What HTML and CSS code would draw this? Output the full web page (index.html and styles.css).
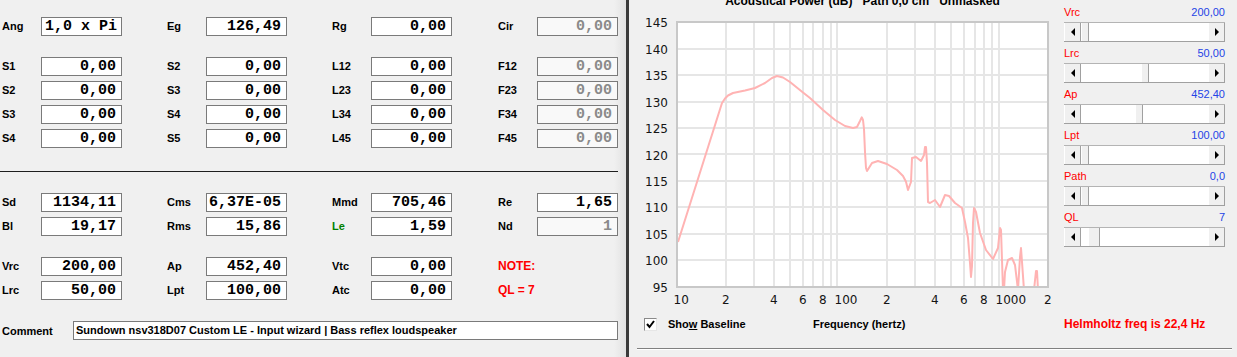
FILE: index.html
```html
<!DOCTYPE html>
<html>
<head>
<meta charset="utf-8">
<link rel="stylesheet" href="styles.css">
</head>
<body>
<div class="app">
  <section class="params">
    <div class="row">
      <div class="field"><span class="lbl">Ang</span><span class="box left">1,0 x Pi</span></div>
      <div class="field"><span class="lbl">Eg</span><span class="box">126,49</span></div>
      <div class="field"><span class="lbl">Rg</span><span class="box">0,00</span></div>
      <div class="field"><span class="lbl">Cir</span><span class="box off">0,00</span></div>
    </div>
    <div class="block">
      <div class="row">
        <div class="field"><span class="lbl">S1</span><span class="box">0,00</span></div>
        <div class="field"><span class="lbl">S2</span><span class="box">0,00</span></div>
        <div class="field"><span class="lbl">L12</span><span class="box">0,00</span></div>
        <div class="field"><span class="lbl">F12</span><span class="box off">0,00</span></div>
      </div>
      <div class="row">
        <div class="field"><span class="lbl">S2</span><span class="box">0,00</span></div>
        <div class="field"><span class="lbl">S3</span><span class="box">0,00</span></div>
        <div class="field"><span class="lbl">L23</span><span class="box">0,00</span></div>
        <div class="field"><span class="lbl">F23</span><span class="box off">0,00</span></div>
      </div>
      <div class="row">
        <div class="field"><span class="lbl">S3</span><span class="box">0,00</span></div>
        <div class="field"><span class="lbl">S4</span><span class="box">0,00</span></div>
        <div class="field"><span class="lbl">L34</span><span class="box">0,00</span></div>
        <div class="field"><span class="lbl">F34</span><span class="box off">0,00</span></div>
      </div>
      <div class="row">
        <div class="field"><span class="lbl">S4</span><span class="box">0,00</span></div>
        <div class="field"><span class="lbl">S5</span><span class="box">0,00</span></div>
        <div class="field"><span class="lbl">L45</span><span class="box">0,00</span></div>
        <div class="field"><span class="lbl">F45</span><span class="box off">0,00</span></div>
      </div>
    </div>
    <div class="sep"></div>
    <div class="block first">
      <div class="row">
        <div class="field"><span class="lbl">Sd</span><span class="box">1134,11</span></div>
        <div class="field"><span class="lbl">Cms</span><span class="box">6,37E-05</span></div>
        <div class="field"><span class="lbl">Mmd</span><span class="box">705,46</span></div>
        <div class="field"><span class="lbl">Re</span><span class="box">1,65</span></div>
      </div>
      <div class="row">
        <div class="field"><span class="lbl">Bl</span><span class="box">19,17</span></div>
        <div class="field"><span class="lbl">Rms</span><span class="box">15,86</span></div>
        <div class="field"><span class="lbl green">Le</span><span class="box">1,59</span></div>
        <div class="field"><span class="lbl">Nd</span><span class="box off">1</span></div>
      </div>
    </div>
    <div class="block">
      <div class="row">
        <div class="field"><span class="lbl">Vrc</span><span class="box">200,00</span></div>
        <div class="field"><span class="lbl">Ap</span><span class="box">452,40</span></div>
        <div class="field"><span class="lbl">Vtc</span><span class="box">0,00</span></div>
        <div class="field"><span class="note">NOTE:</span></div>
      </div>
      <div class="row">
        <div class="field"><span class="lbl">Lrc</span><span class="box">50,00</span></div>
        <div class="field"><span class="lbl">Lpt</span><span class="box">100,00</span></div>
        <div class="field"><span class="lbl">Atc</span><span class="box">0,00</span></div>
        <div class="field"><span class="note">QL = 7</span></div>
      </div>
    </div>
    <div class="comment">
      <span class="clbl">Comment</span>
      <span class="cbox">Sundown nsv318D07 Custom LE - Input wizard | Bass reflex loudspeaker</span>
    </div>
  </section>
  <div class="divider"></div>
  <section class="graph">
    <div class="top">
      <div class="chart">
        <div class="title">Acoustical Power (dB)   Path 0,0 cm   Unmasked</div>
        <svg class="plot" viewBox="629 10 435 298" width="435" height="298" xmlns="http://www.w3.org/2000/svg">
          <defs>
            <clipPath id="pclip"><rect x="678" y="23" width="369" height="263"/></clipPath>
          </defs>
          <rect x="677" y="22" width="371" height="265" fill="#ffffff"/>
          <g stroke="#e6e6e6" stroke-width="2" shape-rendering="crispEdges">
            <line x1="726" y1="22" x2="726" y2="287"/>
            <line x1="754" y1="22" x2="754" y2="287"/>
            <line x1="774" y1="22" x2="774" y2="287"/>
            <line x1="790" y1="22" x2="790" y2="287"/>
            <line x1="803" y1="22" x2="803" y2="287"/>
            <line x1="813" y1="22" x2="813" y2="287"/>
            <line x1="823" y1="22" x2="823" y2="287"/>
            <line x1="831" y1="22" x2="831" y2="287"/>
            <line x1="837" y1="22" x2="837" y2="287"/>
            <line x1="887" y1="22" x2="887" y2="287"/>
            <line x1="915" y1="22" x2="915" y2="287"/>
            <line x1="935" y1="22" x2="935" y2="287"/>
            <line x1="951" y1="22" x2="951" y2="287"/>
            <line x1="964" y1="22" x2="964" y2="287"/>
            <line x1="975" y1="22" x2="975" y2="287"/>
            <line x1="984" y1="22" x2="984" y2="287"/>
            <line x1="992" y1="22" x2="992" y2="287"/>
            <line x1="999" y1="22" x2="999" y2="287"/>
            <line x1="677" y1="49" x2="1048" y2="49"/>
            <line x1="677" y1="75" x2="1048" y2="75"/>
            <line x1="677" y1="102" x2="1048" y2="102"/>
            <line x1="677" y1="128" x2="1048" y2="128"/>
            <line x1="677" y1="154" x2="1048" y2="154"/>
            <line x1="677" y1="181" x2="1048" y2="181"/>
            <line x1="677" y1="207" x2="1048" y2="207"/>
            <line x1="677" y1="234" x2="1048" y2="234"/>
            <line x1="677" y1="260" x2="1048" y2="260"/>
          </g>
          <polyline clip-path="url(#pclip)" fill="none" stroke="#ffb3b3" stroke-width="2" stroke-linejoin="round"
            points="678,242 722,103 725,98.5 728,95.5 733,93 745,90.5 755,88 765,83 772,78 777,76 783,77.5 790,82 803,92.5 810,98 823,110 835,120 845,126 853,128 857,127 860,121 861.7,117.3 863,120 864,129 865,152 866,168 867,171 872,163 878,161 887,164 897,170 903,176 906,181.7 908,190 911,182 912,158 916,157 921,161 924,155 925,147 926,147 927,163 928,202 930,203 935,200 940,207 945,195 949,196 955,203 962,208 965,222 968,238 970,263 971,277 972,266 973,223 974,208 976,212 980,233 986,250 993,259 998,248 1000,228 1001,230 1002,260 1003,290 1004,290 1005,272 1008,260 1012,258 1015,265 1018,290 1020,257 1021,248 1022,262 1024,290 1034,290 1036,271 1037,271 1038,290"/>
          <rect x="677" y="22" width="371" height="265" fill="none" stroke="#c8c8c8" stroke-width="2" shape-rendering="crispEdges"/>
          <g class="ax" text-anchor="end">
            <text x="668" y="27">145</text>
            <text x="668" y="53.5">140</text>
            <text x="668" y="80">135</text>
            <text x="668" y="106.5">130</text>
            <text x="668" y="133">125</text>
            <text x="668" y="159.5">120</text>
            <text x="668" y="186">115</text>
            <text x="668" y="212">110</text>
            <text x="668" y="238.5">105</text>
            <text x="668" y="265">100</text>
            <text x="668" y="291.5">95</text>
          </g>
          <g class="ax">
            <text x="673.5" y="304">10</text>
            <text x="722" y="304">2</text>
            <text x="770" y="304">4</text>
            <text x="799" y="304">6</text>
            <text x="819" y="304">8</text>
            <text x="834.5" y="304">100</text>
            <text x="883" y="304">2</text>
            <text x="931" y="304">4</text>
            <text x="960" y="304">6</text>
            <text x="980" y="304">8</text>
            <text x="995.5" y="304">1000</text>
            <text x="1044" y="304">2</text>
          </g>
        </svg>
      </div>
      <div class="sliders">
        <div class="slider">
          <div class="shead"><span class="sname">Vrc</span><span class="sval">200,00</span></div>
          <div class="sb"><span class="arrow l"><svg width="4" height="8" viewBox="0 0 4 8"><polygon points="4,0 0,4 4,8"/></svg></span><span class="track"><span class="thumb" style="margin-left:0px"></span></span><span class="arrow r"><svg width="4" height="8" viewBox="0 0 4 8"><polygon points="0,0 4,4 0,8"/></svg></span></div>
        </div>
        <div class="slider">
          <div class="shead"><span class="sname">Lrc</span><span class="sval">50,00</span></div>
          <div class="sb"><span class="arrow l"><svg width="4" height="8" viewBox="0 0 4 8"><polygon points="4,0 0,4 4,8"/></svg></span><span class="track"><span class="thumb" style="margin-left:60px"></span></span><span class="arrow r"><svg width="4" height="8" viewBox="0 0 4 8"><polygon points="0,0 4,4 0,8"/></svg></span></div>
        </div>
        <div class="slider">
          <div class="shead"><span class="sname">Ap</span><span class="sval">452,40</span></div>
          <div class="sb"><span class="arrow l"><svg width="4" height="8" viewBox="0 0 4 8"><polygon points="4,0 0,4 4,8"/></svg></span><span class="track"><span class="thumb" style="margin-left:54px"></span></span><span class="arrow r"><svg width="4" height="8" viewBox="0 0 4 8"><polygon points="0,0 4,4 0,8"/></svg></span></div>
        </div>
        <div class="slider">
          <div class="shead"><span class="sname">Lpt</span><span class="sval">100,00</span></div>
          <div class="sb"><span class="arrow l"><svg width="4" height="8" viewBox="0 0 4 8"><polygon points="4,0 0,4 4,8"/></svg></span><span class="track"><span class="thumb" style="margin-left:0px"></span></span><span class="arrow r"><svg width="4" height="8" viewBox="0 0 4 8"><polygon points="0,0 4,4 0,8"/></svg></span></div>
        </div>
        <div class="slider">
          <div class="shead"><span class="sname">Path</span><span class="sval">0,0</span></div>
          <div class="sb"><span class="arrow l"><svg width="4" height="8" viewBox="0 0 4 8"><polygon points="4,0 0,4 4,8"/></svg></span><span class="track"><span class="thumb" style="margin-left:0px"></span></span><span class="arrow r"><svg width="4" height="8" viewBox="0 0 4 8"><polygon points="0,0 4,4 0,8"/></svg></span></div>
        </div>
        <div class="slider">
          <div class="shead"><span class="sname">QL</span><span class="sval">7</span></div>
          <div class="sb"><span class="arrow l"><svg width="4" height="8" viewBox="0 0 4 8"><polygon points="4,0 0,4 4,8"/></svg></span><span class="track"><span class="thumb wide" style="margin-left:7px"></span></span><span class="arrow r"><svg width="4" height="8" viewBox="0 0 4 8"><polygon points="0,0 4,4 0,8"/></svg></span></div>
        </div>
      </div>
    </div>
    <div class="foot">
      <span class="check"><svg width="11" height="11" viewBox="0 0 11 11"><polyline points="2,5 4.5,8 9,2" fill="none" stroke="#000" stroke-width="2"/></svg></span>
      <span class="show">Sho<u>w</u> Baseline</span>
      <span class="freq">Frequency (hertz)</span>
      <span class="helm">Helmholtz freq is 22,4 Hz</span>
    </div>
    <div class="rule"></div>
  </section>
</div>
</body>
</html>
```

FILE: styles.css
```css
html, body {
  margin: 0;
  padding: 0;
}
body {
  width: 1237px;
  height: 357px;
  overflow: hidden;
  background: #f0f0f0;
  font-family: "Liberation Sans", Arial, sans-serif;
  color: #000;
}
.app {
  display: flex;
  height: 357px;
}
.params {
  width: 626px;
  flex: none;
  box-sizing: border-box;
  padding-top: 17px;
  background: linear-gradient(to right, #f0f0f0 614px, #e2e2e2 626px);
}
.divider {
  width: 3px;
  flex: none;
  background: #3a3a3a;
}
.row {
  display: grid;
  grid-template-columns: 165px 165px 166px 121px;
  padding-left: 1px;
  height: 19px;
}
.field {
  display: flex;
  align-items: center;
}
.lbl {
  width: 40px;
  flex: none;
  box-sizing: border-box;
  padding-left: 1px;
  font-size: 11px;
  font-weight: bold;
  line-height: 19px;
}
.lbl.green {
  color: #008000;
}
.note {
  padding-left: 1px;
  font-size: 12px;
  font-weight: bold;
  color: #ff0000;
  line-height: 19px;
}
.box {
  width: 81px;
  height: 19px;
  flex: none;
  box-sizing: border-box;
  border: 1px solid #7a7a7a;
  background: #ffffff;
  font-family: "Liberation Mono", "Courier New", monospace;
  font-weight: bold;
  font-size: 15px;
  line-height: 17px;
  text-align: right;
  padding-right: 5px;
  white-space: pre;
  overflow: hidden;
}
.box.left {
  text-align: left;
  padding-left: 3px;
  padding-right: 0;
}
.box.off {
  background: #f9f9f9;
  color: #8a8a8a;
}
.block {
  display: flex;
  flex-direction: column;
  gap: 5px;
  margin-top: 21px;
}
.sep {
  width: 618px;
  height: 1px;
  background: #1e1e1e;
  margin-top: 23px;
}
.comment {
  display: flex;
  align-items: center;
  margin-top: 21px;
  padding-left: 2px;
}
.clbl {
  width: 71px;
  flex: none;
  font-size: 11px;
  font-weight: bold;
}
.cbox {
  width: 545px;
  height: 19px;
  box-sizing: border-box;
  border: 1px solid #7a7a7a;
  background: #ffffff;
  font-size: 11px;
  font-weight: bold;
  line-height: 17px;
  padding-left: 2px;
  white-space: nowrap;
  overflow: hidden;
}

/* right panel */
.graph {
  flex: 1;
  display: flex;
  flex-direction: column;
  min-width: 0;
}
.top {
  display: flex;
  height: 308px;
}
.chart {
  width: 435px;
  flex: none;
  display: flex;
  flex-direction: column;
}
.title {
  margin-top: -7px;
  margin-left: 48px;
  width: 371px;
  height: 17px;
  line-height: 17px;
  text-align: center;
  font-size: 12px;
  font-weight: bold;
  white-space: pre;
}
.plot {
  display: block;
}
.ax text {
  font-family: "DejaVu Sans", Verdana, sans-serif;
  font-size: 12px;
  fill: #141414;
}
.sliders {
  width: 161px;
  flex: none;
  padding-top: 2px;
  display: flex;
  flex-direction: column;
  gap: 1px;
}
.shead {
  display: flex;
  justify-content: space-between;
  height: 20px;
  line-height: 20px;
  font-size: 11px;
}
.sname {
  color: #ff0000;
}
.sval {
  color: #2444e6;
}
.sb {
  display: flex;
  height: 20px;
  box-sizing: border-box;
  background: #ffffff;
  border-top: 1px solid #b4b4b4;
  border-bottom: 1px solid #a0a0a0;
}
.arrow {
  width: 17px;
  flex: none;
  box-sizing: border-box;
  display: flex;
  align-items: center;
  justify-content: center;
  background: #f0f0f0;
  border-left: 1px solid #ffffff;
  border-right: 1px solid #a0a0a0;
}
.arrow svg {
  display: block;
}
.arrow polygon {
  fill: #000;
}
.track {
  flex: 1;
  display: flex;
}
.thumb {
  width: 8px;
  flex: none;
  box-sizing: border-box;
  background: #f0f0f0;
  border-left: 1px solid #ffffff;
  border-right: 1px solid #a0a0a0;
}
.thumb.wide {
  width: 12px;
}
.foot {
  display: flex;
  align-items: center;
  height: 16px;
  margin-top: 8px;
  padding-left: 15px;
  font-size: 11px;
  font-weight: bold;
}
.check {
  width: 13px;
  height: 13px;
  flex: none;
  box-sizing: border-box;
  border: 1px solid;
  border-color: #8a8a8a #e6e6e6 #e6e6e6 #8a8a8a;
  background: #ffffff;
  display: flex;
  align-items: center;
  justify-content: center;
}
.check svg {
  display: block;
}
.show {
  margin-left: 11px;
  width: 145px;
  flex: none;
}
.freq {
  width: 251px;
  flex: none;
}
.helm {
  font-size: 12px;
  color: #ff0000;
}
.rule {
  height: 1px;
  margin: 16px 5px 0 8px;
  background: #808080;
  border-bottom: 1px solid #ffffff;
}
```
